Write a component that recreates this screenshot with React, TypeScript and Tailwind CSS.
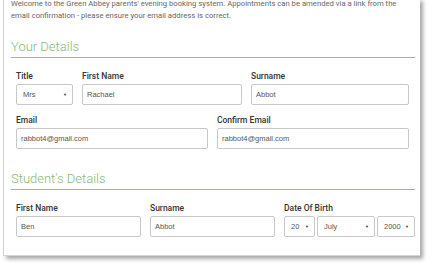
import React from 'react';

const labelCls = 'block text-[8.5px] leading-[10px] font-medium text-[#333] mb-[3px]';
const boxCls =
  'flex h-[21px] items-center rounded-[2px] border border-[#c8c8c8] bg-white px-[4px] text-[7.5px] text-[#555] font-["Liberation_Sans",Arial,sans-serif]';

function Field({ label, value, width }: { label: string; value: string; width: string }) {
  return (
    <div className={width}>
      <span className={labelCls}>{label}</span>
      <div className={boxCls}>{value}</div>
    </div>
  );
}

function Select({ value, width }: { value: string; width: string }) {
  return (
    <div className={`${boxCls} ${width} justify-between pl-[6px] pr-[5px]`}>
      <span>{value}</span>
      <span className="text-[4px] leading-none text-[#333]">▼</span>
    </div>
  );
}

function Heading({ children, mt }: { children: React.ReactNode; mt: string }) {
  return (
    <h2
      className={`${mt} mr-[5px] border-b border-[#8cc46f] pb-[3px] text-[13px] font-light leading-[15px] text-[#86ba74]`}
    >
      {children}
    </h2>
  );
}

export default function App() {
  return (
    <div className="h-[267px] w-[433px] overflow-hidden bg-white font-['Roboto',sans-serif]">
      <div className="ml-[3px] mt-[-2px] w-[417px] border-l border-b border-[#d4d4d4] bg-white pb-[18px] pl-[7px] shadow-[3px_3px_4px_rgba(0,0,0,0.35)]">
        <p className="text-[7.7px] leading-[11.5px] text-[#666]">
          Welcome to the Green Abbey parents' evening booking system. Appointments can be amended via a link from the
          <br />
          email confirmation - please ensure your email address is correct.
        </p>

        <Heading mt="mt-[18px]">Your Details</Heading>

        <div className="ml-[5px] mt-[13px] flex gap-[9px]">
          <div className="w-[57px]">
            <span className={labelCls}>Title</span>
            <Select value="Mrs" width="w-[57px]" />
          </div>
          <Field label="First Name" value="Rachael" width="w-[160px]" />
          <Field label="Surname" value="Abbot" width="w-[158px]" />
        </div>

        <div className="ml-[5px] mt-[10px] flex gap-[9px]">
          <Field label="Email" value="rabbot4@gmail.com" width="w-[192px]" />
          <Field label="Confirm Email" value="rabbot4@gmail.com" width="w-[192px]" />
        </div>

        <Heading mt="mt-[22px]">Student's Details</Heading>

        <div className="ml-[5px] mt-[13px] flex gap-[9px]">
          <Field label="First Name" value="Ben" width="w-[125px]" />
          <Field label="Surname" value="Abbot" width="w-[125px]" />
          <div className="w-[131px]">
            <span className={labelCls}>Date Of Birth</span>
            <div className="flex gap-[2px]">
              <Select value="20" width="w-[31px]" />
              <Select value="July" width="w-[58px]" />
              <Select value="2000" width="w-[38px]" />
            </div>
          </div>
        </div>
      </div>
    </div>
  );
}
